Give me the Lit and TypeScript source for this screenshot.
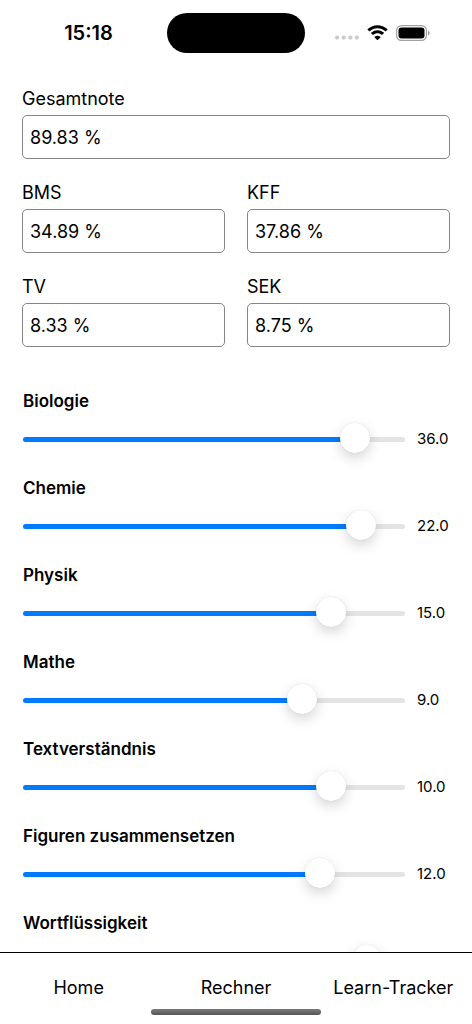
import { LitElement, html, css } from "lit";
import { customElement, property, state } from "lit/decorators.js";

interface Score {
  id: string;
  label: string;
  value: string;
}

interface Subject {
  id: string;
  label: string;
  value: number;
  max: number;
}

@customElement("status-bar")
class StatusBar extends LitElement {
  static styles = css`
    :host {
      display: grid;
      grid-template-columns: 1fr 138px 1fr;
      align-items: center;
      height: 65px;
      flex: none;
    }
    .time {
      justify-self: center;
      padding-left: 10px;
      font-size: 20px;
      line-height: 24px;
      font-weight: 600;
    }
    .island {
      height: 40px;
      border-radius: 20px;
      background: #000;
    }
    .status {
      display: flex;
      align-items: center;
      gap: 8px;
      padding-left: 30px;
    }
    svg {
      display: block;
      flex: none;
    }
  `;

  render() {
    return html`
      <span class="time">15:18</span>
      <span class="island"></span>
      <div class="status">
        <svg width="24" height="16" viewBox="0 0 24 16" fill="#cbcbcb" aria-hidden="true">
          <circle cx="2.1" cy="12.6" r="2.1" />
          <circle cx="8.7" cy="12.6" r="2.1" />
          <circle cx="15.3" cy="12.6" r="2.1" />
          <circle cx="21.9" cy="12.6" r="2.1" />
        </svg>
        <svg width="21" height="16" viewBox="0 0 21 16" fill="#000" aria-hidden="true">
          <path d="M10.5 3.2c2.9 0 5.6 1.1 7.7 3.1.2.2.4.2.6 0l1.5-1.5c.2-.2.2-.5 0-.7C14.8-1.1 6.2-1.1.7 4.1c-.2.2-.2.5 0 .7l1.5 1.5c.2.2.4.2.6 0 2.100-2 4.800-3.100 7.700-3.100z" />
          <path d="M10.5 8.2c1.600 0 3.100.6 4.200 1.600.2.2.4.2.6 0l1.500-1.500c.2-.2.2-.5 0-.7-3.600-3.300-9-3.300-12.600 0-.2.2-.2.5 0 .7l1.500 1.500c.2.2.4.2.6 0 1.200-1 2.600-1.600 4.200-1.600z" />
          <path d="M13.400 12.500c.2-.2.2-.5 0-.7-1.700-1.400-4.100-1.400-5.800 0-.2.2-.2.5 0 .7l2.600 2.600c.2.2.4.2.6 0z" />
        </svg>
        <svg width="35" height="16" viewBox="0 0 35 16" aria-hidden="true">
          <rect x=".6" y=".6" width="29.8" height="14.8" rx="4.800" fill="none" stroke="#a2a2a2" stroke-width="1.2" />
          <rect x="2.5" y="2.5" width="26" height="11" rx="3" fill="#000" />
          <path d="M32 5.4v5.200c1-.4 1.700-1.400 1.700-2.600S33 5.800 32 5.400z" fill="#a2a2a2" />
        </svg>
      </div>
    `;
  }
}

@customElement("score-field")
class ScoreField extends LitElement {
  @property({ attribute: false }) score!: Score;

  static styles = css`
    :host {
      display: flex;
      flex-direction: column;
      gap: 4px;
      min-width: 0;
    }
    .label {
      font-size: 18px;
      line-height: 24px;
    }
    .value {
      box-sizing: border-box;
      width: 100%;
      height: 44px;
      margin: 0;
      padding: 0 7px;
      border: 1px solid #858585;
      border-radius: 5px;
      outline: none;
      background: #fff;
      color: #000;
      font: inherit;
      font-size: 18px;
    }
  `;

  render() {
    const { id, label, value } = this.score;
    return html`
      <label class="label" for=${id}>${label}</label>
      <input class="value" id=${id} type="text" readonly .value=${value} />
    `;
  }
}

@customElement("subject-slider")
class SubjectSlider extends LitElement {
  @property({ attribute: false }) subject!: Subject;
  @state() private current?: number;

  static styles = css`
    :host {
      display: flex;
      flex-direction: column;
      gap: 11px;
    }
    .label {
      font-size: 17px;
      line-height: 24px;
      font-weight: 600;
    }
    .row {
      display: flex;
      align-items: center;
      gap: 12px;
    }
    .value {
      flex: none;
      width: 33px;
      font-size: 15px;
      line-height: 24px;
      white-space: nowrap;
    }
    .slider {
      -webkit-appearance: none;
      appearance: none;
      flex: 1;
      min-width: 0;
      height: 30px;
      margin: 0;
      outline: none;
      background: none;
    }
    .slider::-webkit-slider-runnable-track {
      height: 5px;
      border-radius: 3px;
      background: linear-gradient(to right, #007aff var(--fill), #e4e4e5 var(--fill));
    }
    .slider::-webkit-slider-thumb {
      -webkit-appearance: none;
      width: 30px;
      height: 30px;
      margin-top: -14px;
      border-radius: 50%;
      background: #fff;
      box-shadow: 0 0 1px rgba(0, 0, 0, 0.15), 0 5px 13px rgba(0, 0, 0, 0.17);
    }
  `;

  private onInput(event: Event) {
    this.current = Number((event.target as HTMLInputElement).value);
  }

  render() {
    const { id, label, max } = this.subject;
    const value = this.current ?? this.subject.value;
    return html`
      <label class="label" for=${id}>${label}</label>
      <div class="row">
        <input
          class="slider"
          id=${id}
          type="range"
          min="0"
          max=${max}
          .value=${String(value)}
          style="--fill: ${(value / max) * 100}%"
          @input=${this.onInput}
        />
        <output class="value" for=${id}>${value.toFixed(1)}</output>
      </div>
    `;
  }
}

@customElement("tab-bar")
class TabBar extends LitElement {
  static styles = css`
    :host {
      display: block;
      flex: none;
      border-top: 1px solid #000;
      background: #fff;
    }
    .tabs {
      display: grid;
      grid-template-columns: repeat(3, 1fr);
      padding-top: 22px;
    }
    .tab {
      color: #000;
      font-size: 18px;
      line-height: 26px;
      text-align: center;
      text-decoration: none;
      white-space: nowrap;
    }
    .indicator {
      width: 36%;
      height: 6px;
      margin: 8px auto 9px;
      border-radius: 3px;
      background: linear-gradient(#7a7a7a, #555);
    }
  `;

  render() {
    return html`
      <nav class="tabs">
        <a class="tab" href="#home">Home</a>
        <a class="tab" href="#rechner">Rechner</a>
        <a class="tab" href="#learn-tracker">Learn-Tracker</a>
      </nav>
      <div class="indicator"></div>
    `;
  }
}

@customElement("app-root")
class AppRoot extends LitElement {
  private total: Score = { id: "gesamt", label: "Gesamtnote", value: "89.83 %" };

  private scores: Score[] = [
    { id: "bms", label: "BMS", value: "34.89 %" },
    { id: "kff", label: "KFF", value: "37.86 %" },
    { id: "tv", label: "TV", value: "8.33 %" },
    { id: "sek", label: "SEK", value: "8.75 %" },
  ];

  private subjects: Subject[] = [
    { id: "biologie", label: "Biologie", value: 36, max: 40 },
    { id: "chemie", label: "Chemie", value: 22, max: 24 },
    { id: "physik", label: "Physik", value: 15, max: 18 },
    { id: "mathe", label: "Mathe", value: 9, max: 12 },
    { id: "textverstaendnis", label: "Textverständnis", value: 10, max: 12 },
    { id: "figuren", label: "Figuren zusammensetzen", value: 12, max: 15 },
    { id: "wortfluessigkeit", label: "Wortflüssigkeit", value: 14, max: 15 },
  ];

  static styles = css`
    :host {
      display: flex;
      flex-direction: column;
      height: 100vh;
      background: #fff;
      color: #000;
      font-family: Inter, "Liberation Sans", sans-serif;
    }
    .content {
      flex: 1;
      min-height: 0;
      padding: 22px 22px 0;
      overflow-y: auto;
      scrollbar-width: none;
    }
    .scores {
      display: grid;
      grid-template-columns: 1fr 1fr;
      gap: 22px;
    }
    .total {
      grid-column: 1 / -1;
    }
    .subjects {
      display: flex;
      flex-direction: column;
      gap: 22px;
      padding: 42px 0 24px 1px;
    }
  `;

  render() {
    return html`
      <status-bar></status-bar>
      <main class="content">
        <section class="scores">
          <score-field class="total" .score=${this.total}></score-field>
          ${this.scores.map((score) => html`<score-field .score=${score}></score-field>`)}
        </section>
        <section class="subjects">
          ${this.subjects.map((subject) => html`<subject-slider .subject=${subject}></subject-slider>`)}
        </section>
      </main>
      <tab-bar></tab-bar>
    `;
  }
}
